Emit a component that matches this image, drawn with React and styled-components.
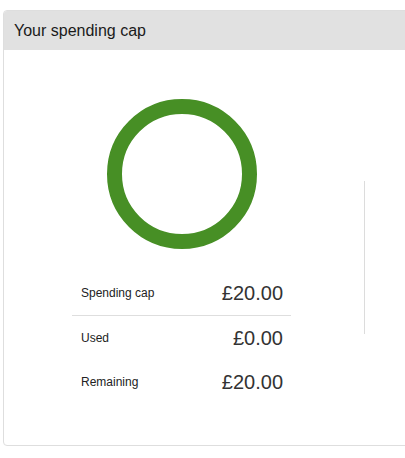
import React from "react";
import styled, { createGlobalStyle } from "styled-components";

const GlobalStyle = createGlobalStyle`
  html, body {
    margin: 0;
    padding: 0;
    background: #ffffff;
    overflow: hidden;
  }
  body {
    font-family: "Liberation Sans", Arial, sans-serif;
    color: #222;
  }
`;

const Page = styled.div`
  padding: 10px 0 0 3px;
  width: 405px;
  height: 458px;
  box-sizing: border-box;
  overflow: hidden;
`;

const Card = styled.section`
  width: 430px;
  height: 436px;
  box-sizing: border-box;
  border: 1px solid #dedede;
  border-radius: 4px;
  background: #fff;
  display: flex;
  flex-direction: column;
  overflow: hidden;
`;

const Header = styled.header`
  height: 39px;
  flex-shrink: 0;
  background: #e1e1e1;
  display: flex;
  align-items: center;
  padding: 0 0 0 10px;
  font-size: 16px;
  color: #1a1a1a;
`;

const Body = styled.div`
  display: flex;
  align-items: flex-start;
  padding: 49px 0 0 68px;
`;

const Summary = styled.div`
  width: 219px;
  display: flex;
  flex-direction: column;
  align-items: center;
`;

const Ring = styled.svg`
  display: block;
  width: 150px;
  height: 150px;
  margin-bottom: 22px;
`;

const Rows = styled.div`
  width: 100%;
  display: flex;
  flex-direction: column;
`;

const Row = styled.div`
  height: ${({ $divider }) => ($divider ? "45px" : "44px")};
  box-sizing: border-box;
  display: flex;
  align-items: center;
  justify-content: space-between;
  padding: 0 8px 0 9px;
  border-bottom: ${({ $divider }) => ($divider ? "1px solid #dedede" : "none")};
`;

const Label = styled.span`
  font-size: 12px;
  color: #222;
`;

const Value = styled.span`
  font-size: 20px;
  color: #333;
`;

const Separator = styled.div`
  width: 0;
  height: 153px;
  border-left: 1px solid #dcdcdc;
  margin: 82px 0 0 73px;
`;

const rows = [
  { label: "Spending cap", value: "£20.00", divider: true },
  { label: "Used", value: "£0.00" },
  { label: "Remaining", value: "£20.00" },
];

export default function App() {
  return (
    <>
      <GlobalStyle />
      <Page>
        <Card>
          <Header>Your spending cap</Header>
          <Body>
            <Summary>
              <Ring viewBox="0 0 150 150">
                <circle
                  cx="75"
                  cy="75"
                  r="67.5"
                  fill="none"
                  stroke="#478f25"
                  strokeWidth="15"
                />
              </Ring>
              <Rows>
                {rows.map((r) => (
                  <Row key={r.label} $divider={r.divider}>
                    <Label>{r.label}</Label>
                    <Value>{r.value}</Value>
                  </Row>
                ))}
              </Rows>
            </Summary>
            <Separator />
          </Body>
        </Card>
      </Page>
    </>
  );
}
